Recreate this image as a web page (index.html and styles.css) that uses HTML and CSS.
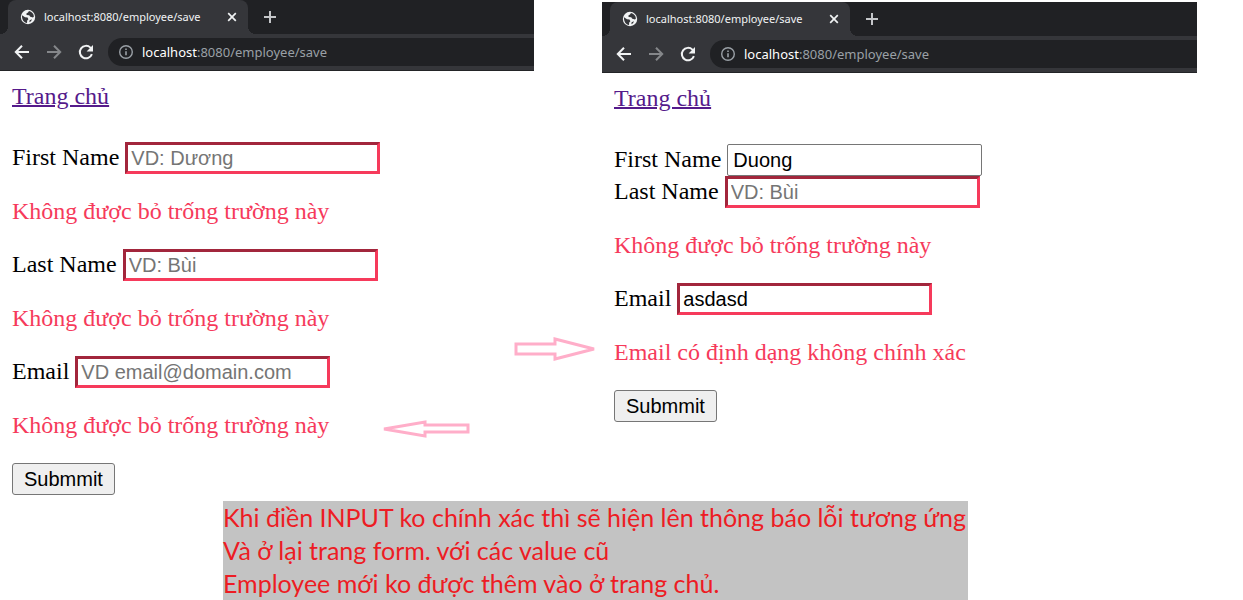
FILE: index.html
```html
<!DOCTYPE html>
<html lang="vi">
<head>
<meta charset="utf-8">
<title>Employee form validation</title>
<link rel="stylesheet" href="styles.css">
</head>
<body>
<svg class="sprite" aria-hidden="true">
  <symbol id="globe" viewBox="0 0 16 16">
    <circle cx="8" cy="8" r="7.2" fill="#f1f3f4"/>
    <path d="M2 6.2 5 8.2 7.5 8.6 8.4 10.2 7.2 11.5 7 13.9C3.9 13.5 1.8 10.8 2 6.2ZM9 2 8 3.6 6.4 4.6 6.6 6 9.2 6.2 10.3 7.8 13 8.4 13.9 7.6C13.8 4.8 11.8 2.4 9 2Z" fill="#35363a"/>
    <path d="M9.6 11.2 12 10.2 11 12.2 9.4 13.2Z" fill="#35363a"/>
  </symbol>
  <symbol id="close" viewBox="0 0 16 16"><path d="m4.2 4.2 7.6 7.6m0-7.6-7.6 7.6" fill="none" stroke="#f1f3f4" stroke-width="1.7"/></symbol>
  <symbol id="plus" viewBox="0 0 16 16"><path d="M8 2v12M2 8h12" fill="none" stroke="#c4c6c9" stroke-width="2"/></symbol>
  <symbol id="back" viewBox="0 0 16 16"><path d="M15 8H2.4M8 1.8 1.8 8 8 14.2" fill="none" stroke="currentColor" stroke-width="2"/></symbol>
  <symbol id="forward" viewBox="0 0 16 16"><path d="M1 8h12.6M8 1.8 14.2 8 8 14.2" fill="none" stroke="currentColor" stroke-width="2"/></symbol>
  <symbol id="reload" viewBox="0 0 16 16"><path d="M13.9 10.2A6.2 6.2 0 1 1 12.4 3.6L14 5.2" fill="none" stroke="#f1f3f4" stroke-width="2"/><path d="M15 1v6.4H8.6Z" fill="#f1f3f4"/></symbol>
  <symbol id="info" viewBox="0 0 16 16"><circle cx="8" cy="8" r="6.3" fill="none" stroke="#9aa0a6" stroke-width="1.4"/><path d="M8 7.2v4M8 4.4v1.6" stroke="#9aa0a6" stroke-width="1.6"/></symbol>
</svg>

<main class="windows">
  <section class="window">
    <header class="chrome">
      <div class="tabs">
        <div class="tab">
          <svg class="icon"><use href="#globe"/></svg>
          <span class="tab-title">localhost:8080/employee/save</span>
          <button class="chrome-button" aria-label="Close tab"><svg class="icon"><use href="#close"/></svg></button>
        </div>
        <button class="chrome-button" aria-label="New tab"><svg class="icon"><use href="#plus"/></svg></button>
      </div>
      <div class="toolbar">
        <button class="chrome-button" aria-label="Back"><svg class="icon"><use href="#back"/></svg></button>
        <button class="chrome-button disabled" aria-label="Forward"><svg class="icon"><use href="#forward"/></svg></button>
        <button class="chrome-button" aria-label="Reload"><svg class="icon"><use href="#reload"/></svg></button>
        <div class="address"><svg class="icon"><use href="#info"/></svg><span><b>localhost</b>:8080/employee/save</span></div>
      </div>
    </header>
    <form class="page">
      <a class="home" href="#">Trang chủ</a>
      <div class="field"><label for="first-a">First Name</label><input class="invalid" id="first-a" type="text" placeholder="VD: Dương"></div>
      <p class="error">Không được bỏ trống trường này</p>
      <div class="field"><label for="last-a">Last Name</label><input class="invalid" id="last-a" type="text" placeholder="VD: Bùi"></div>
      <p class="error">Không được bỏ trống trường này</p>
      <div class="field"><label for="email-a">Email</label><input class="invalid" id="email-a" type="text" placeholder="VD email@domain.com"></div>
      <p class="error">Không được bỏ trống trường này</p>
      <button class="submit" type="button">Submmit</button>
    </form>
    <svg class="arrow arrow-left" viewBox="0 0 88 18"><path d="M2 9 43 2V5H86V12H43V16Z"/></svg>
  </section>

  <section class="window second">
    <header class="chrome">
      <div class="tabs">
        <div class="tab">
          <svg class="icon"><use href="#globe"/></svg>
          <span class="tab-title">localhost:8080/employee/save</span>
          <button class="chrome-button" aria-label="Close tab"><svg class="icon"><use href="#close"/></svg></button>
        </div>
        <button class="chrome-button" aria-label="New tab"><svg class="icon"><use href="#plus"/></svg></button>
      </div>
      <div class="toolbar">
        <button class="chrome-button" aria-label="Back"><svg class="icon"><use href="#back"/></svg></button>
        <button class="chrome-button disabled" aria-label="Forward"><svg class="icon"><use href="#forward"/></svg></button>
        <button class="chrome-button" aria-label="Reload"><svg class="icon"><use href="#reload"/></svg></button>
        <div class="address"><svg class="icon"><use href="#info"/></svg><span><b>localhost</b>:8080/employee/save</span></div>
      </div>
    </header>
    <form class="page">
      <a class="home" href="#">Trang chủ</a>
      <div class="field"><label for="first-b">First Name</label><input id="first-b" type="text" value="Duong"></div>
      <div class="field"><label for="last-b">Last Name</label><input class="invalid" id="last-b" type="text" placeholder="VD: Bùi"></div>
      <p class="error">Không được bỏ trống trường này</p>
      <div class="field"><label for="email-b">Email</label><input class="invalid" id="email-b" type="text" value="asdasd"></div>
      <p class="error">Email có định dạng không chính xác</p>
      <button class="submit" type="button">Submmit</button>
    </form>
    <svg class="arrow arrow-right" viewBox="0 0 82 24"><path d="M2 7H41V2L80 12 41 22V17H2Z"/></svg>
  </section>
</main>

<div class="note-row">
  <aside class="note">
    <p>Khi điền INPUT ko chính xác thì sẽ hiện lên thông báo lỗi tương ứng</p>
    <p>Và ở lại trang form. với các value cũ</p>
    <p>Employee mới ko được thêm vào ở trang chủ.</p>
  </aside>
</div>
</body>
</html>
```
FILE: styles.css
```css
* { box-sizing: border-box; }

body {
  margin: 0;
  background: #fff;
  color: #000;
  font-family: "Liberation Serif", "Times New Roman", serif;
  font-size: 24px;
  line-height: 27px;
}

p { margin: 0; }

.sprite { position: absolute; width: 0; height: 0; }

.windows {
  display: grid;
  grid-template-columns: 534fr 595fr;
  column-gap: 68px;
  align-items: start;
  padding-right: 46px;
}

.window { position: relative; min-width: 0; }
.second { margin-top: 2px; }

/* Browser frame */
.chrome {
  overflow: hidden;
  background: #35363a;
  border-bottom: 1px solid #232427;
  color: #f1f3f4;
  font-family: "Noto Sans", "Open Sans", sans-serif;
}

.icon { display: block; flex: none; width: 16px; height: 16px; }

.tabs {
  display: flex;
  align-items: center;
  gap: 14px;
  height: 34px;
  padding-left: 8px;
  background: #202124;
}

.tab {
  position: relative;
  display: flex;
  align-items: center;
  gap: 8px;
  width: 240px;
  height: 34px;
  padding: 0 8px 0 12px;
  border-radius: 8px 8px 0 0;
  background: #35363a;
}

.tab::before,
.tab::after {
  content: "";
  position: absolute;
  bottom: 0;
  width: 8px;
  height: 8px;
}
.tab::before { right: 100%; background: radial-gradient(circle at 0 0, #202124 8px, #35363a 8px); }
.tab::after { left: 100%; background: radial-gradient(circle at 100% 0, #202124 8px, #35363a 8px); }

.tab-title { flex: 1; font-size: 11px; line-height: 16px; white-space: nowrap; }

.chrome-button {
  flex: none;
  padding: 0;
  border: 0;
  background: none;
  color: #f1f3f4;
}
.disabled { color: #85878a; }

.toolbar {
  display: flex;
  align-items: center;
  gap: 16px;
  height: 36px;
  padding-left: 14px;
}

.address {
  display: flex;
  flex: 1;
  align-items: center;
  gap: 8px;
  height: 28px;
  margin-left: -2px;
  padding-left: 10px;
  border-radius: 14px 0 0 14px;
  background: #202124;
  color: #9aa0a6;
  font-size: 13px;
  line-height: 20px;
  white-space: nowrap;
}
.address b { color: #fff; font-weight: 400; }

/* Form */
.page { display: flex; flex-direction: column; align-items: flex-start; padding: 12px 12px 0; }

.home { margin-bottom: 32px; color: #551a8b; text-decoration-thickness: 2px; }

.field { display: flex; align-items: center; gap: 6px; }
.field label { padding-bottom: 2px; }

.field input {
  width: 255px;
  height: 32px;
  padding: 0 5px;
  border: 1px solid #767676;
  border-radius: 2px;
  background: #fff;
  color: #000;
  font: 20px "Liberation Sans", Arial, sans-serif;
}
.field input.invalid { padding: 0 3px; border: 3px inset #f63a5b; border-radius: 0; }
.field input::placeholder { color: #757575; }

.error { margin: 24px 0; color: #f63a5b; }

.submit {
  height: 32px;
  padding: 0 11px;
  border: 1px solid #767676;
  border-radius: 3px;
  background: #efefef;
  color: #000;
  font: 20px "Liberation Sans", Arial, sans-serif;
}

/* Annotations drawn over the two windows */
.arrow { position: absolute; fill: none; stroke: #ffaec9; stroke-width: 3; }
.arrow-left { left: 382px; top: 420px; width: 88px; height: 18px; }
.arrow-right { left: -88px; top: 335px; width: 82px; height: 24px; }

.note-row {
  display: grid;
  grid-template-columns: 223fr 745fr 275fr;
  margin-top: 6px;
}

.note {
  grid-column: 2;
  background: #c3c3c3;
  color: #ed1c24;
  font-family: Lato, "Noto Sans", sans-serif;
  font-size: 25px;
  line-height: 33px;
}
```
